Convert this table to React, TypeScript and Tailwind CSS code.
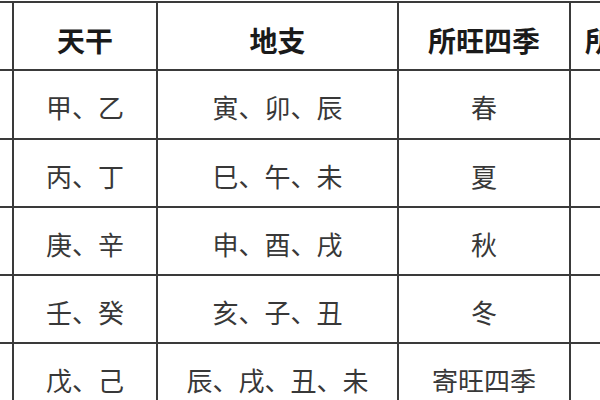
const header = ['', '天干', '地支', '所旺四季', '所主方位']

const rows = [
  ['', '甲、乙', '寅、卯、辰', '春', '东'],
  ['', '丙、丁', '巳、午、未', '夏', '南'],
  ['', '庚、辛', '申、酉、戌', '秋', '西'],
  ['', '壬、癸', '亥、子、丑', '冬', '北'],
  ['', '戊、己', '辰、戌、丑、未', '寄旺四季', '中'],
]

const font = { fontFamily: '"Noto Sans CJK SC", "Noto Sans", sans-serif' }

export default function App() {
  return (
    <div className="w-[600px] h-[400px] overflow-hidden bg-white" style={font}>
      <div className="mt-px ml-[-88px] w-[840px] grid grid-cols-[100px_142px_239px_170px_140px] grid-rows-[66px_67px_66px_66px_66px_66px] gap-[2px] py-[2px] bg-[#3a3a3a]">
        {header.map((h, i) => (
          <div key={`h-${i}`} className="bg-white flex items-center justify-center pt-[7px] text-[28px] font-bold text-[#1a1a1a] whitespace-nowrap">
            {h}
          </div>
        ))}
        {rows.map((row, r) =>
          row.map((cell, c) => (
            <div key={`${r}-${c}`} className="bg-white flex items-center justify-center pt-[4px] text-[26px] text-[#383838] whitespace-nowrap">
              {cell}
            </div>
          ))
        )}
      </div>
    </div>
  )
}
